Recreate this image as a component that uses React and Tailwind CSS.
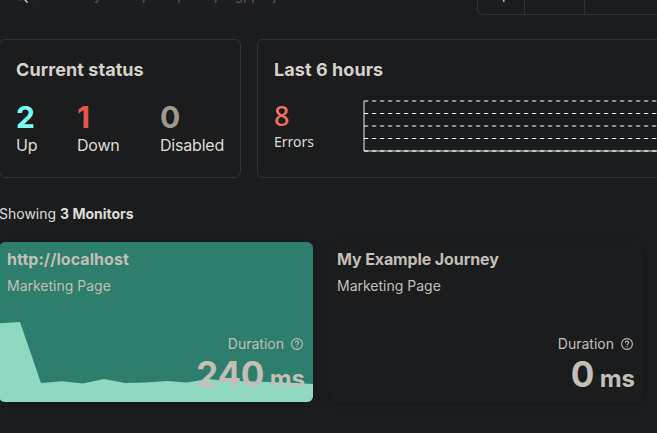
import React from "react";

function SearchBar() {
  return (
    <div className="flex h-[15px] items-end gap-2 overflow-hidden">
      <div className="flex h-10 w-[469px] shrink-0 items-center rounded-md border border-[#1c1e26] bg-[#1c1d1f] pl-[14px] text-sm text-[#5c5953]">
        <svg className="mr-[4px] h-4 w-4 shrink-0" viewBox="0 0 16 16" fill="none" stroke="#dfdcd6" strokeWidth="1.3">
          <circle cx="5" cy="7.5" r="5" />
          <path d="M8.5 11.3l4 4.3" />
        </svg>
        <span className="whitespace-nowrap">Search by name, URL, host, tag, project or location</span>
      </div>
      <div className="flex h-10 w-[190px] shrink-0 rounded-l-md border border-r-0 border-[#303133] text-sm text-[#dfdcd6]">
        <div className="flex w-[47px] items-center justify-center border-r border-[#303133] pb-0.5">Up</div>
        <div className="w-[60px] border-r border-[#303133]" />
      </div>
    </div>
  );
}

function Stat({ value, label, className }) {
  return (
    <div>
      <div className={"text-[30px] leading-8 font-bold " + className}>{value}</div>
      <div className="text-base leading-6 tracking-[-0.012em] text-[#dfdcd6]">{label}</div>
    </div>
  );
}

function ErrorsChart() {
  const lines = [1, 13.5, 26, 38.5, 51];
  return (
    <svg className="block h-[54px] w-[300px] shrink-0" viewBox="0 0 300 54" fill="none" stroke="#ffffff">
      {lines.map((y) => (
        <path key={y} d={`M1 ${y}H300`} strokeDasharray="4.3 3.7" />
      ))}
      <path d="M1 1V51H300" strokeOpacity="0.9" />
    </svg>
  );
}

function HelpIcon() {
  return (
    <svg className="h-3 w-3" viewBox="0 0 12 12" fill="none" stroke="currentColor" strokeWidth="1.1">
      <circle cx="6" cy="6" r="5.4" />
      <path d="M4.4 4.8c0-2.2 3.3-2.1 3.3-.2 0 1.1-1.6 1.2-1.6 2.5" />
      <path d="M6.1 8.1v1.1" />
    </svg>
  );
}

function MonitorCard({ title, value, className, titleClassName, children }) {
  return (
    <div className={"relative h-40 w-[314px] shrink-0 overflow-hidden rounded-md text-[#c3bfb7] shadow-[0_2px_8px_rgba(0,0,0,0.2)] " + className}>
      {children}
      <div className="relative flex h-full flex-col px-2 pt-[5px] pb-[7px]">
        <div className={"text-base leading-6 font-bold " + titleClassName}>{title}</div>
        <div className="mt-[3px] text-sm leading-6">Marketing Page</div>
        <div className="mt-auto flex items-center justify-end gap-[7px] pr-[2px] text-sm leading-5">
          Duration
          <HelpIcon />
        </div>
        <div className="text-right text-[35px] leading-10 font-bold tracking-[-0.01em]">
          {value}
          <span className="text-2xl tracking-normal"> ms</span>
        </div>
      </div>
    </div>
  );
}

export default function App() {
  return (
    <div className="h-[433px] w-[657px] overflow-hidden bg-[#1b1c1e] font-['Inter',sans-serif]">
      <SearchBar />
      <div className="mt-6 flex gap-4">
        <div className="-ml-px h-[139px] w-[242px] shrink-0 rounded-md border border-[#2b3443] pt-[18px] pl-4">
          <h2 className="text-lg leading-6 font-bold tracking-[0.004em] text-[#d6d2ca]">Current status</h2>
          <div className="mt-[19px] flex">
            <div className="w-[61px]"><Stat value="2" label="Up" className="text-[#7dfff3]" /></div>
            <div className="w-[83px]"><Stat value="1" label="Down" className="text-[#e7554d]" /></div>
            <Stat value="0" label="Disabled" className="text-[#a0988a]" />
          </div>
        </div>
        <div className="h-[139px] w-[410px] shrink-0 rounded-md border border-[#2b3443] pt-[18px] pl-4">
          <h2 className="text-lg leading-6 font-bold tracking-[0.004em] text-[#d6d2ca]">Last 6 hours</h2>
          <div className="mt-[18px] flex">
            <div className="w-[89px] shrink-0 font-['Noto_Sans',sans-serif]">
              <div className="text-[27px] leading-8 font-medium text-[#ee7259]">8</div>
              <div className="text-sm leading-5 text-[#dfdcd6]">Errors</div>
            </div>
            <ErrorsChart />
          </div>
        </div>
      </div>
      <div className="mt-6 -ml-px text-sm leading-6 text-[#dfdcd6]">
        Showing <b>3 Monitors</b>
      </div>
      <div className="mt-4 -ml-px flex gap-4">
        <MonitorCard title="http://localhost" value="240" className="bg-[#2d7e6c]" titleClassName="tracking-[0.004em]">
          <svg className="absolute bottom-0 left-0 h-20 w-[314px]" viewBox="0 0 314 80">
            <path
              d="M0 1.4L21 0L42 61L63 59.3L84 61.5L105 57L126 61L147 60.5L168 59L188 60.5L209 57L230 59L251 59.3L272 60L293 60.8L314 62V80H0Z"
              fill="#90d7c2"
            />
          </svg>
        </MonitorCard>
        <MonitorCard title="My Example Journey" value="0" className="bg-[#1b1c1e]" titleClassName="tracking-[-0.007em]" />
      </div>
    </div>
  );
}
